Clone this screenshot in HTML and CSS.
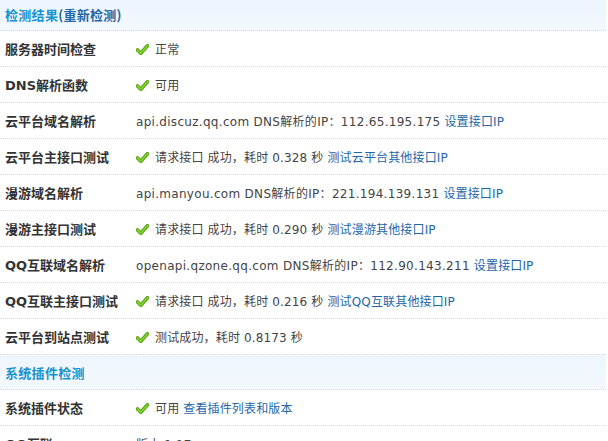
FILE: index.html
```html
<!DOCTYPE html>
<html>
<head>
<meta charset="utf-8">
<link rel="stylesheet" href="styles.css">
</head>
<body>
<table class="tb">
  <tr class="hd first"><th colspan="2"><span class="h">检测结果</span><a class="lk" href="#">(重新检测)</a></th></tr>
  <tr><td class="lb">服务器时间检查</td><td class="v"><i class="ok"></i>正常</td></tr>
  <tr><td class="lb">DNS解析函数</td><td class="v"><i class="ok"></i>可用</td></tr>
  <tr><td class="lb">云平台域名解析</td><td class="v"><span class="lat">api.discuz.qq.com DNS解析的IP：112.65.195.175</span> <a href="#">设置接口IP</a></td></tr>
  <tr><td class="lb">云平台主接口测试</td><td class="v"><i class="ok"></i>请求接口 成功，耗时 0.328 秒 <a href="#">测试云平台其他接口IP</a></td></tr>
  <tr><td class="lb">漫游域名解析</td><td class="v"><span class="lat">api.manyou.com DNS解析的IP：221.194.139.131</span> <a href="#">设置接口IP</a></td></tr>
  <tr><td class="lb">漫游主接口测试</td><td class="v"><i class="ok"></i>请求接口 成功，耗时 0.290 秒 <a href="#">测试漫游其他接口IP</a></td></tr>
  <tr><td class="lb">QQ互联域名解析</td><td class="v"><span class="lat">openapi.qzone.qq.com DNS解析的IP：112.90.143.211</span> <a href="#">设置接口IP</a></td></tr>
  <tr><td class="lb">QQ互联主接口测试</td><td class="v"><i class="ok"></i>请求接口 成功，耗时 0.216 秒 <a href="#">测试QQ互联其他接口IP</a></td></tr>
  <tr><td class="lb">云平台到站点测试</td><td class="v"><i class="ok"></i>测试成功，耗时 0.8173 秒</td></tr>
  <tr class="hd"><th colspan="2"><span class="h">系统插件检测</span></th></tr>
  <tr><td class="lb">系统插件状态</td><td class="v"><i class="ok"></i>可用 <a href="#">查看插件列表和版本</a></td></tr>
  <tr><td class="lb">QQ互联</td><td class="v">版本 1.17</td></tr>
</table>
</body>
</html>
```
FILE: styles.css
```css
html, body { margin: 0; padding: 0; background: #fff; }
body { font-family: "DejaVu Sans", "Noto Sans CJK SC", sans-serif; font-size: 12px; color: #444; overflow: hidden; }
.tb { width: 606px; border-collapse: collapse; }
.tb td, .tb th { padding: 0; border-bottom: 1px dotted #c6e0f2; vertical-align: middle; }
.tb tr td { height: 35px; }
.hd th { height: 34px; text-align: left; padding-left: 5px; background: linear-gradient(#eef5fd, #f2f8fd); font-weight: bold; font-size: 13px; letter-spacing: 0.3px; font-family: "Noto Sans CJK SC", sans-serif; }
.hd.first th { height: 29px; padding-bottom: 1px; }
.h { color: #1592cf; }
.hd .lk { color: #2366a8; text-decoration: none; }
.lb { width: 131px; padding-left: 5px !important; font-weight: bold; font-size: 13px; color: #333; font-family: "DejaVu Sans", "Noto Sans CJK SC", sans-serif; }
.v { padding-left: 0; color: #444; white-space: nowrap; letter-spacing: 0.15px; }
.v .lat { letter-spacing: 0.3px; }
.v a { color: #2366a8; text-decoration: none; }
.ok { display: inline-block; width: 13px; height: 11px; margin-right: 6px; vertical-align: -1px;
  background: url("data:image/svg+xml;utf8,<svg xmlns='http://www.w3.org/2000/svg' width='13' height='11' viewBox='0 0 13 11'><path d='M1.5 6 L4.8 9.2 L11.5 1.8' fill='none' stroke='%234d9a10' stroke-width='3.6' stroke-linecap='round' stroke-linejoin='round'/><path d='M1.5 6 L4.8 9.2 L11.5 1.8' fill='none' stroke='%2381d02b' stroke-width='2' stroke-linecap='round' stroke-linejoin='round'/></svg>") no-repeat; }
```
